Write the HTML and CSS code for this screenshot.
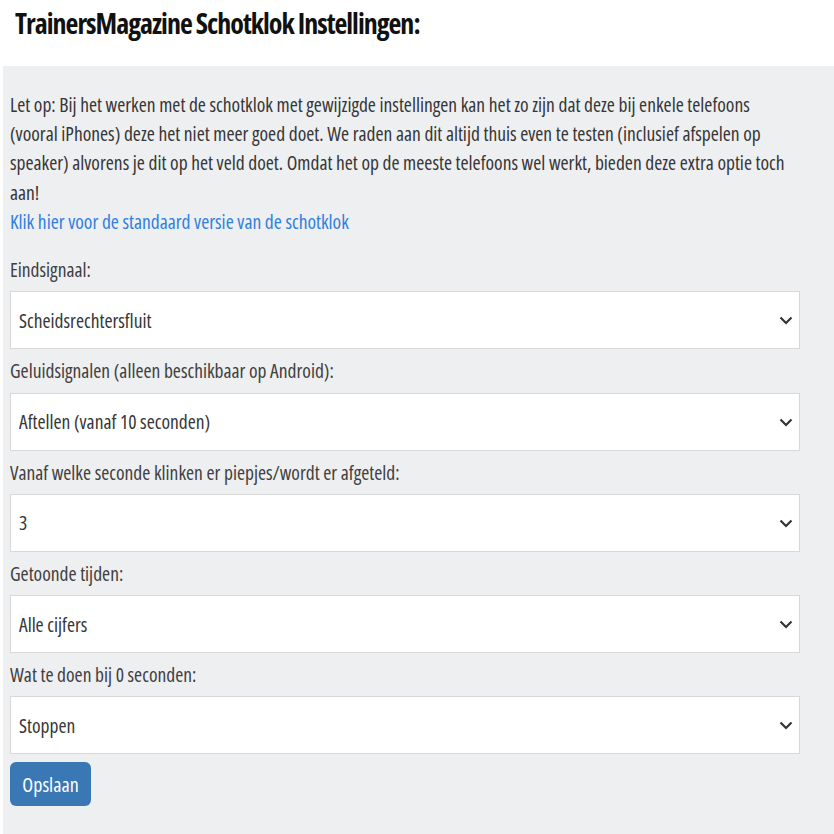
FILE: index.html
```html
<!DOCTYPE html>
<html lang="nl">
<head>
<meta charset="utf-8">
<title>TrainersMagazine Schotklok Instellingen</title>
<link rel="stylesheet" href="styles.css">
</head>
<body>
<header class="page-header">
  <h1 class="page-title">TrainersMagazine Schotklok Instellingen:</h1>
</header>
<main class="panel">
  <div class="content">
    <p class="notice">Let op: Bij het werken met de schotklok met gewijzigde instellingen kan het zo zijn dat deze bij enkele telefoons (vooral iPhones) deze het niet meer goed doet. We raden aan dit altijd thuis even te testen (inclusief afspelen op speaker) alvorens je dit op het veld doet. Omdat het op de meeste telefoons wel werkt, bieden deze extra optie toch aan!<br><a class="notice-link" href="#">Klik hier voor de standaard versie van de schotklok</a></p>
    <form class="settings">
      <label class="field-label" for="f1">Eindsignaal:</label>
      <div class="select-wrap">
        <select id="f1" class="select"><option>Scheidsrechtersfluit</option></select>
        <svg class="chev" width="14" height="9" viewBox="0 0 14 9"><path d="M1.5 1.5 L7 7 L12.5 1.5" fill="none" stroke="#333" stroke-width="2.2"/></svg>
      </div>
      <label class="field-label" for="f2">Geluidsignalen (alleen beschikbaar op Android):</label>
      <div class="select-wrap">
        <select id="f2" class="select"><option>Aftellen (vanaf 10 seconden)</option></select>
        <svg class="chev" width="14" height="9" viewBox="0 0 14 9"><path d="M1.5 1.5 L7 7 L12.5 1.5" fill="none" stroke="#333" stroke-width="2.2"/></svg>
      </div>
      <label class="field-label" for="f3">Vanaf welke seconde klinken er piepjes/wordt er afgeteld:</label>
      <div class="select-wrap">
        <select id="f3" class="select"><option>3</option></select>
        <svg class="chev" width="14" height="9" viewBox="0 0 14 9"><path d="M1.5 1.5 L7 7 L12.5 1.5" fill="none" stroke="#333" stroke-width="2.2"/></svg>
      </div>
      <label class="field-label" for="f4">Getoonde tijden:</label>
      <div class="select-wrap">
        <select id="f4" class="select"><option>Alle cijfers</option></select>
        <svg class="chev" width="14" height="9" viewBox="0 0 14 9"><path d="M1.5 1.5 L7 7 L12.5 1.5" fill="none" stroke="#333" stroke-width="2.2"/></svg>
      </div>
      <label class="field-label" for="f5">Wat te doen bij 0 seconden:</label>
      <div class="select-wrap">
        <select id="f5" class="select"><option>Stoppen</option></select>
        <svg class="chev" width="14" height="9" viewBox="0 0 14 9"><path d="M1.5 1.5 L7 7 L12.5 1.5" fill="none" stroke="#333" stroke-width="2.2"/></svg>
      </div>
      <button type="button" class="btn-save">Opslaan</button>
    </form>
  </div>
</main>
</body>
</html>
```

FILE: styles.css
```css
html, body {
  margin: 0;
  padding: 0;
  background: #ffffff;
}
body {
  font-family: "Open Sans", sans-serif;
  font-stretch: 75%;
  color: #363636;
  height: 834px;
  display: flex;
  flex-direction: column;
  overflow: hidden;
}
.page-header {
  height: 66px;
  padding-left: 15px;
  box-sizing: border-box;
  display: flex;
  align-items: center;
}
.page-title {
  margin: 0;
  font-size: 28px;
  font-weight: 700;
  letter-spacing: -1px;
  color: #111;
  padding-bottom: 20px;
}
.panel {
  flex: 1;
  margin-left: 3px;
  background: #eeeff1;
  padding: 24px 0 0 7px;
}
.content {
  width: 790px;
}
.notice {
  margin: 0;
  font-size: 19.5px;
  line-height: 29.2px;
  color: #363636;
}
.notice-link {
  color: #2f80e0;
  text-decoration: none;
}
.settings {
  display: flex;
  flex-direction: column;
  margin-top: 12px;
}
.field-label {
  display: block;
  font-size: 19.5px;
  line-height: 29px;
  margin: 7px 0 7.25px;
  color: #404040;
}
.select-wrap {
  position: relative;
  height: 58px;
}
.select {
  appearance: none;
  -webkit-appearance: none;
  width: 100%;
  height: 58px;
  box-sizing: border-box;
  border: 1px solid #d8d8d8;
  border-radius: 0;
  background: #fff;
  padding: 0 0 0 8px;
  font-family: inherit;
  font-stretch: inherit;
  font-size: 19.5px;
  color: #363636;
  outline: none;
}
.chev {
  position: absolute;
  right: 7px;
  top: 25px;
}
.btn-save {
  align-self: flex-start;
  margin-top: 8px;
  height: 44px;
  width: 81px;
  border: none;
  border-radius: 6px;
  background: #3a78b5;
  color: #fff;
  font-family: inherit;
  font-stretch: inherit;
  font-size: 20px;
  padding: 0;
}
```
